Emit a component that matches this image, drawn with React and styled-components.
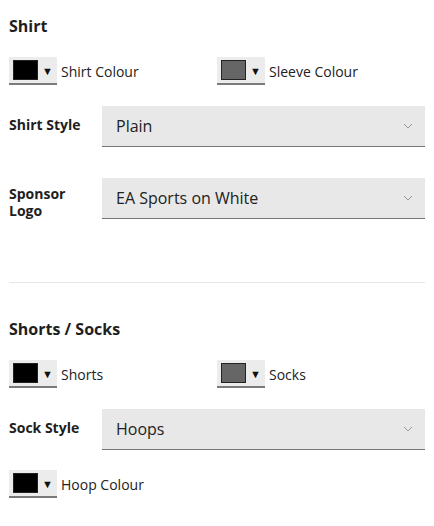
import styled, { createGlobalStyle } from "styled-components";

const Global = createGlobalStyle`
  body {
    margin: 0;
    background: #fff;
    font-family: "Open Sans", "Liberation Sans", sans-serif;
    color: #222;
  }
`;

const Page = styled.div`
  padding: 14px 9px 20px;
`;

const Section = styled.section`
  display: flex;
  flex-direction: column;
`;

const Heading = styled.h2`
  margin: 0 0 19px;
  font-size: 16px;
  font-weight: 700;
  line-height: 24px;
  color: #1e1e1e;
`;

const ColourRow = styled.div`
  display: grid;
  grid-template-columns: 1fr 1fr;
  margin-bottom: ${(p) => p.$mb || 0}px;
`;

const Option = styled.div`
  display: flex;
  align-items: center;
  gap: 4px;
  font-size: 14px;
  color: #222;
`;

const Picker = styled.div`
  display: flex;
  align-items: center;
  width: 48px;
  height: 28px;
  padding: 0 4px;
  box-sizing: border-box;
  background: #ececec;
  border-bottom: 2px solid #7a7a7a;
`;

const Swatch = styled.span`
  width: 25px;
  height: 20px;
  box-sizing: border-box;
  border: 1px solid #222;
  background: ${(p) => p.$color};
`;

const Arrow = styled.span`
  margin-left: 4px;
  font-size: 11px;
  line-height: 1;
  color: #111;
`;

const FieldRow = styled.div`
  display: flex;
  align-items: flex-start;
  margin-bottom: ${(p) => p.$mb || 0}px;
`;

const FieldLabel = styled.label`
  width: 93px;
  flex-shrink: 0;
  padding-top: ${(p) => p.$pt}px;
  font-size: 14px;
  font-weight: 700;
  line-height: 17px;
  color: #1e1e1e;
`;

const Select = styled.div`
  flex: 1;
  height: 41px;
  box-sizing: border-box;
  display: flex;
  align-items: center;
  justify-content: space-between;
  padding: 0 12px 0 14px;
  background: #e8e8e8;
  border-bottom: 1.5px solid #777;
  font-size: 16px;
  color: #222;
`;

const Divider = styled.hr`
  margin: 0 0 34px;
  border: 0;
  border-top: 1px solid #e6e6e6;
`;

const Chevron = () => (
  <svg width="10" height="6" viewBox="0 0 10 6" fill="none">
    <path d="M1 1l4 4 4-4" stroke="#9a9a9a" strokeWidth="1" />
  </svg>
);

function ColourOption({ color, label }) {
  return (
    <Option>
      <Picker>
        <Swatch $color={color} />
        <Arrow>▼</Arrow>
      </Picker>
      {label}
    </Option>
  );
}

function Field({ label, value, mb, pt }) {
  return (
    <FieldRow $mb={mb}>
      <FieldLabel $pt={pt}>{label}</FieldLabel>
      <Select>
        {value}
        <Chevron />
      </Select>
    </FieldRow>
  );
}

export default function App() {
  return (
    <>
      <Global />
      <Page>
        <Section>
          <Heading>Shirt</Heading>
          <ColourRow $mb={21}>
            <ColourOption color="#000" label="Shirt Colour" />
            <ColourOption color="#666" label="Sleeve Colour" />
          </ColourRow>
          <Field label="Shirt Style" value="Plain" mb={31} pt={10} />
          <Field label="Sponsor Logo" value="EA Sports on White" mb={63} pt={7} />
        </Section>
        <Divider />
        <Section>
          <Heading>Shorts / Socks</Heading>
          <ColourRow $mb={21}>
            <ColourOption color="#000" label="Shorts" />
            <ColourOption color="#666" label="Socks" />
          </ColourRow>
          <Field label="Sock Style" value="Hoops" mb={20} pt={10} />
          <ColourRow>
            <ColourOption color="#000" label="Hoop Colour" />
          </ColourRow>
        </Section>
      </Page>
    </>
  );
}
